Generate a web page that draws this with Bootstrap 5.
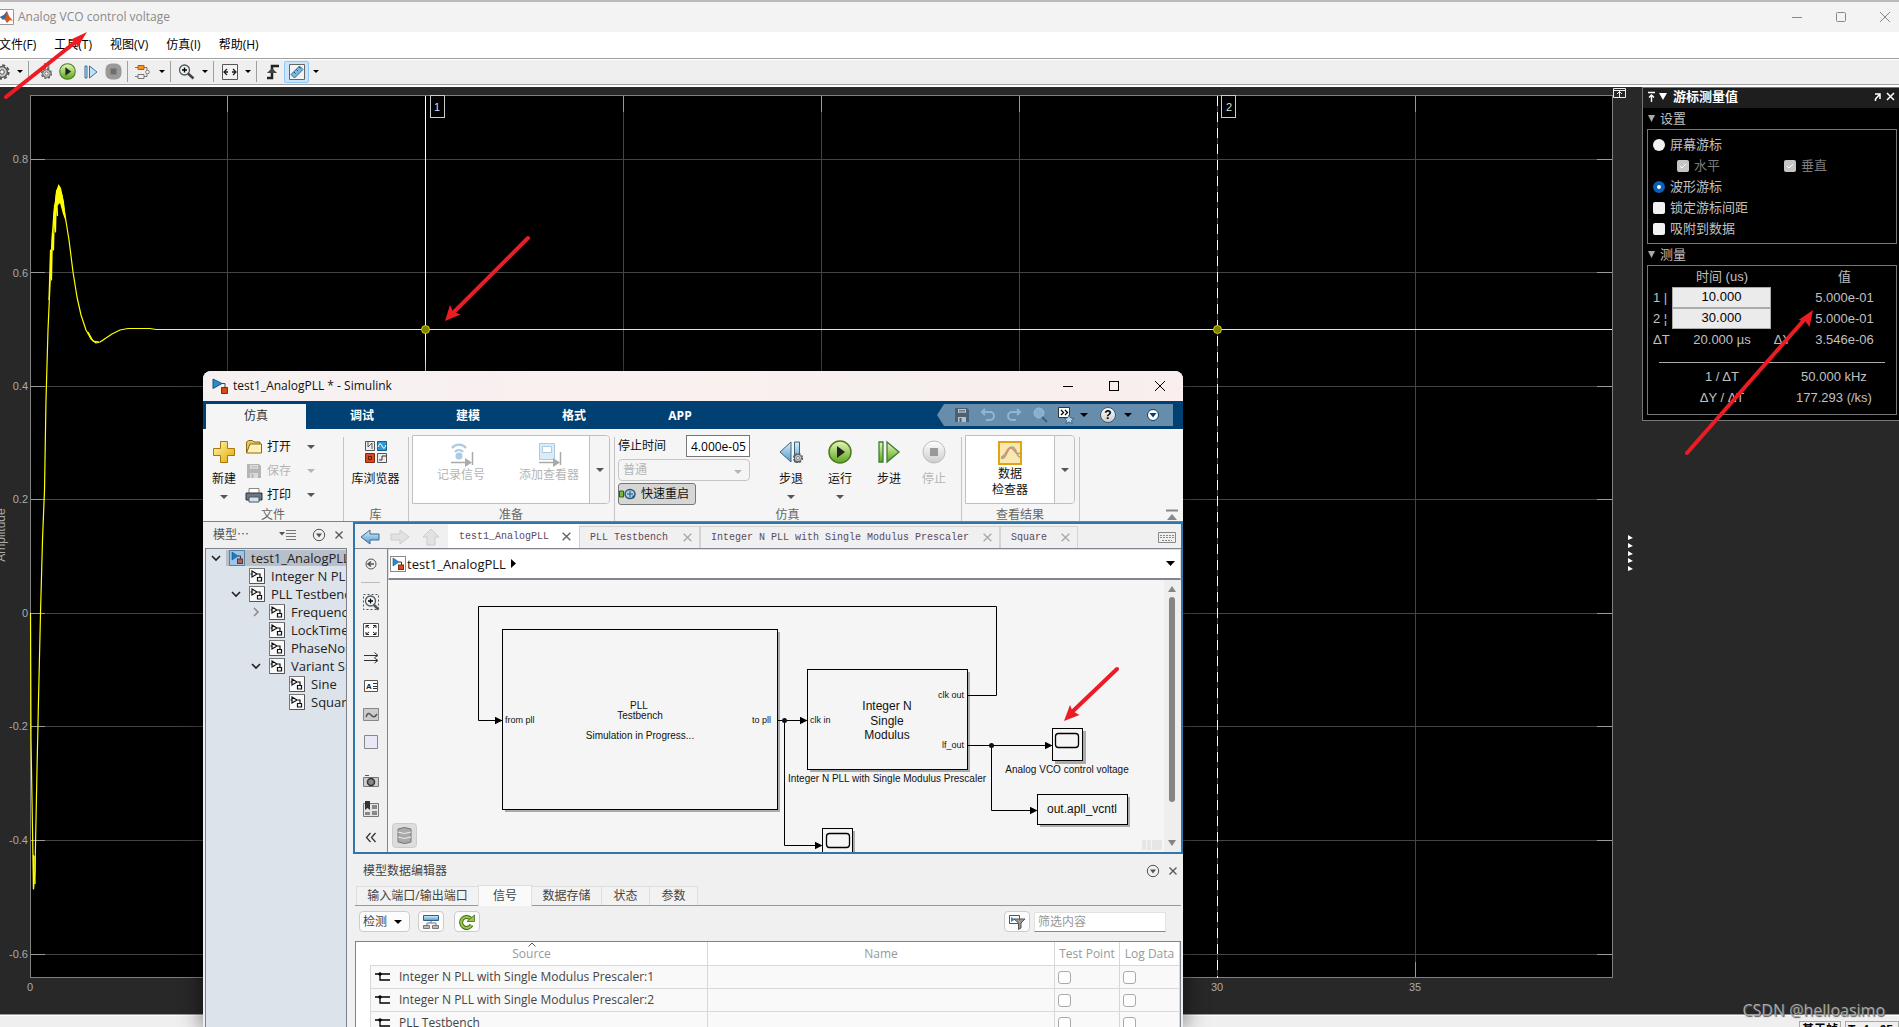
<!DOCTYPE html>
<html lang="zh-CN">
<head>
<meta charset="utf-8">
<meta name="viewport" content="width=device-width, initial-scale=1">
<title>Analog VCO control voltage</title>
<link rel="stylesheet" href="https://cdn.jsdelivr.net/npm/bootstrap@5.3.0/dist/css/bootstrap.min.css">
<style>
:root{--ui:"Open Sans","Noto Sans CJK SC",sans-serif;--arial:"Liberation Sans","Noto Sans CJK SC",sans-serif;--song:"Liberation Mono","Noto Sans CJK SC",monospace;}
body{font-family:var(--ui);font-size:12px;line-height:16px;color:#111;background:#282828;overflow:hidden}
button{border:0;background:none;padding:0;color:inherit;font:inherit;line-height:16px}
svg{display:block;flex:none}
a{color:inherit;text-decoration:none}
.nowrap{white-space:nowrap}
.tri{width:0;height:0;border:4px solid transparent;border-top-color:#555;border-bottom:0;display:block;flex:none}
.tri.dark{border-top-color:#000}
.tri.pale{border-top-color:#b5b5b5}
/* scope window */
.scope-title{height:32px;background:#f3f3f3;border-top:2px solid #b9b9b9;color:#8a8a8a}
.scope-menu{height:27px;background:#fff;border-bottom:1px solid #a0a0a0;gap:18px;margin-left:-1px}
.scope-tools{height:28px;background:#efefef;border-top:1px solid #fff;border-bottom:2px solid #fff;box-shadow:inset 0 -1px #a0a0a0;padding-bottom:2px}
.tbi{width:23px;height:22px;display:flex;align-items:center;justify-content:center}
.tbi.on{width:25px;background:#cce4f9;border:1px solid #90c8f6;border-radius:2px}
.tba{width:13px;height:22px;display:flex;align-items:center;justify-content:center}
.tba .tri{border-width:3px;border-bottom:0}
.bar{width:1px;height:21px;background:#a0a0a0;margin-right:4px;margin-left:2px}
.first-tool{margin-left:-10px}
.statusbar{height:12px;background:#efefef;border-top:1px solid #fff;box-shadow:0 -1px #999;font-size:12px;overflow:hidden;font-family:var(--arial)}
.statusbar span{border:1px solid #a8a8a8;height:20px;margin-top:5px;padding:0 2px;line-height:16px;white-space:nowrap}
.statusbar .rate{width:54px}
.watermark{right:14px;bottom:7px;font:16px/20px "Open Sans",sans-serif;color:#a9a9a9;text-shadow:1px 1px 1px #555}
/* measurements dock */
.dock{width:257px;background:#000;border:1px solid #777;border-right:0;color:#c0c0c0;font-family:var(--arial);font-size:13px;padding-bottom:5px}
.dock-head{height:20px;background:#1e1e1e;color:#fff;font-weight:700;padding:0 4px 2px}
.dock-sub{height:21px;padding-left:5px;gap:5px}
.dock-box{border:1px solid #777;margin:0 2px 0 4px}
.opts{height:115px;padding:4px 5px}
.opts label{height:21px;gap:5px}
.opts input,.grid-check{appearance:none;width:12px;height:12px;background:#f2f2f2;border-radius:2px;margin:0;flex:none}
.opts input[type=radio]{border-radius:50%}
.opts input[type=radio]:checked{border:4px solid #0a5fb8;background:#fff}
.opts input:disabled{background:#c4c4c4 url("data:image/svg+xml,%3Csvg xmlns='http://www.w3.org/2000/svg' viewBox='0 0 12 12'%3E%3Cpath d='M3 6l2 2 4-4' fill='none' stroke='white'/%3E%3C/svg%3E")}
.opts .off{color:#7c7c7c}
.meas{table-layout:fixed;width:100%;margin-bottom:6px}
.meas td,.meas th{height:21px;padding:0;text-align:center;font-weight:400;line-height:16px}
.meas .lab{text-align:left;padding-left:5px}
.meas input{width:99px;height:21px;border:1px solid #aaa;background:#ebebeb;text-align:center;padding:0 0 2px;display:block;color:#000;border-radius:0}
.meas .rule td{height:16px;vertical-align:bottom;padding:0 11px}
.meas .rule hr{margin:0 0 3px;opacity:1;color:#aaa}
/* simulink window */
.sim{left:203px;top:371px;width:980px;bottom:0;background:#f0f0f0;border-radius:8px 8px 0 0;overflow:hidden;box-shadow:0 0 24px rgba(0,0,0,.6)}
.sim-title{height:30px;background:linear-gradient(90deg,#f6f1f1,#faf0ef 50%,#f6f0ee 70%,#faeeee);padding-left:9px;gap:4px}
.sim-title .win{width:46px;height:30px;display:flex;align-items:center;justify-content:center}
.ribbon-tabs{height:28px;background:#004073;padding:3px 10px 0 3px}
.ribbon-tabs a{width:100px;margin-right:6px;text-align:center;color:#fff;font-weight:700;line-height:24px;height:25px}
.ribbon-tabs a.active{background:#f5f5f5;color:#333;font-weight:400}
.quick{width:236px;height:22px;background:#668dac;clip-path:polygon(0 50%,7px 0,100% 0,100% 100%,7px 100%);padding-left:17px}
.ribbon{height:93px;background:#f5f5f5;border-bottom:1px solid #808080}
.sect{position:relative;padding-top:6px}
.sect+.sect::before{content:"";position:absolute;left:0;top:8px;bottom:0;width:1px;background:#c4c4c4}
.sect>.cap{position:absolute;left:0;right:0;bottom:-2px;text-align:center;color:#666}
.big{display:flex;flex-direction:column;align-items:center;padding-top:5px;gap:7px}
.big .tri{margin-top:1px}
.dim{color:#b5b5b5}
.gal{background:#fff;border:1px solid #c0c0c0;border-radius:0 4px 4px 0;height:69px}
.gal .big{padding-top:4px;gap:0}
.gal .log{width:96px}
.gal .drop{width:20px;border-left:1px solid #c0c0c0;background:#f5f5f5;border-radius:0 4px 4px 0}
.s-file{width:140px}.s-lib{width:65px}.s-prep{width:206px}.s-run{width:347px}.s-res{width:118px}
.file-row{height:24px}
.simopts{gap:2px}
.stoptime{width:64px;height:22px;border:1px solid #777;background:#fff;padding:0 0 0 4px;font-size:12px}
.mode{width:132px;height:22px;border:1px solid #c6c6c6;border-radius:4px;background:#f5f5f5;color:#b5b5b5;padding:0 4px;font-size:12px;appearance:none}
.fast{width:78px;height:22px;border:1px solid #777;border-radius:3px;background:#d6d6d6}
/* model browser */
.browser{width:144px;padding-left:2px}
.browser-head{height:26px;color:#555;padding:0 3px 0 8px}
.tree{background:#dce3eb;border:1px solid #7a828e;border-bottom:0;overflow:hidden;list-style:none;margin:0;padding:0;font-size:13px;color:#222}
.tree li{height:18px;display:flex;align-items:center;gap:6px;white-space:nowrap}
.tree li.l0{padding-left:3px}.tree li.l1{padding-left:23px}.tree li.l2{padding-left:43px}.tree li.l3{padding-left:63px}
.tree li.l0>span{display:flex;gap:6px;align-items:center;background:#b9bfc9;margin-left:-3px;padding-left:3px;flex:1}
.chev{width:14px;height:10px;flex:none}
.work{width:830px;margin-left:6px}
.editor{height:332px;border:2px solid #2f76ab;background:#f0f0f0}
.doc-tabs{height:25px;border-bottom:1px solid #82858f;font:10px/16px var(--song);color:#5c4a5c}
.doc-tabs .doc{height:22px;margin-top:2px;border:1px solid #d4d4d4;border-bottom:0;padding:0 6px 0 10px;background:#f0f0f0}
.doc-tabs .doc.active{background:#fff;height:24px;margin-top:0;border-color:#fff}
.d-a{width:131px}.d-b{width:121px}.d-c{width:300px}.d-d{width:78px}
.palette{width:33px;border-right:1px solid #82858f}
.crumb{height:31px;background:#fff;border:1px solid #ddd;border-bottom:2px solid #82858f;padding:0 4px 1px 1px;gap:1px;font-size:13px}
.canvas-bg{background:#f5f5f5}
.dataed-head{height:30px;padding:4px 5px 0 10px;color:#444}
.dt{border-bottom:1px solid #999;height:22px;padding-left:2px;margin:0 2px 0 2px;color:#444;align-items:flex-end}
.dt button{height:19px;border:1px solid #dedede;border-bottom:0;margin-left:-1px;background:#f2f2f2}
.dt button.active{background:#fafafa;height:21px;margin-bottom:-1px;padding:0 14px}
.dt .w5{width:123px}.dt .w4{width:71px}.dt .w2{width:49px}
.dtools{height:35px;padding:0 17px 4px 6px}
.dtools .sq,.pick{border:1px solid #ccc;border-radius:4px;background:#fcfcfc;height:21px}
.sq{width:26px;display:flex;align-items:center;justify-content:center}
.sq.next{margin-left:10px}
.pick{width:51px;font-size:12px;padding:0 3px;appearance:none;color:#444}
.filt{width:132px;height:20px;border:1px solid #e2e2e2;border-bottom-color:#888;background:#fff;padding:0 3px;font-size:12px}
.filt::placeholder{color:#999}
.sigs{margin:0 2px;border:1px solid #7d8290;border-bottom:0;background:#fff;overflow:hidden;color:#444}
.sigs table{width:100%;table-layout:fixed;border-collapse:separate;border-spacing:0}
.sigs th{height:23px;font-weight:400;color:#999;text-align:center;padding:1px 0 0;border-right:1px solid #d8d8d8;line-height:16px;position:relative;white-space:nowrap}
.sigs td{height:23px;padding:0;border-top:1px solid #d8d8d8;border-right:1px solid #d8d8d8;background:#f9f9f9;line-height:16px}
.sigs td.gut{background:#fff;border-top:0}
.grid-check{display:block;width:13px;height:13px;background:#fdfdfd;border:1px solid #aaa;border-radius:3px;margin-left:3px}
.marks{inset:0;pointer-events:none}
</style>
<script src="https://cdn.jsdelivr.net/npm/bootstrap@5.3.0/dist/js/bootstrap.bundle.min.js"></script>
</head>
<body class="vh-100 d-flex flex-column position-relative">
<svg width="0" height="0" class="position-absolute" aria-hidden="true">
<defs>
<linearGradient id="gGreen" x2="0" y2="1"><stop stop-color="#e6f8b8"/><stop offset="1" stop-color="#5aa51c"/></linearGradient>
<linearGradient id="gGray" x2="0" y2="1"><stop stop-color="#fff"/><stop offset="1" stop-color="#ccc"/></linearGradient>
<linearGradient id="gBlue" x2="0" y2="1"><stop stop-color="#d9effb"/><stop offset="1" stop-color="#4f9acb"/></linearGradient>
<linearGradient id="gGold" x2="1" y2="1"><stop stop-color="#fff6b0"/><stop offset="1" stop-color="#e2a800"/></linearGradient>
<symbol id="gear" viewBox="0 0 20 20"><circle cx="10" cy="10" r="7.500" fill="none" stroke="#555" stroke-width="2" stroke-dasharray="3.500 2.390"/><circle cx="10" cy="10" r="6" fill="#ccc" stroke="#555" stroke-width="1.500"/><circle cx="10" cy="10" r="2.500" fill="#fff" stroke="#444"/></symbol>
<symbol id="play" viewBox="0 0 24 24"><circle cx="12" cy="12" r="11" fill="url(#gGreen)" stroke="#4c7a24" stroke-width="1.500"/><path d="M9 6l8 6-8 6z" fill="#222"/></symbol>
<symbol id="blk" viewBox="0 0 16 16"><rect x=".5" y=".5" width="15" height="15" fill="#fafafa" stroke="#777"/><path d="M15.500 1v14.500H1" fill="none" stroke="#555"/><path d="M3 3l5 3-5 3zM8 6h3v3M8.500 9.500h4v3.500h-4zM1.500 6H3" fill="none" stroke="#111" stroke-width="1.200"/></symbol>
<symbol id="mdl" viewBox="0 0 16 16"><rect x=".5" y=".5" width="15" height="15" fill="#fff" stroke="#888"/><path d="M3 2l6 4-6 4z" fill="#2b8cc9" stroke="#135580" stroke-width=".6"/><path d="M9 6h2.500v3" fill="none" stroke="#333"/><rect x="8.500" y="9" width="5" height="4.500" fill="#d9481c" stroke="#832a0c"/></symbol>
<symbol id="mdl2" viewBox="0 0 16 16"><path fill="#9cc5e8" stroke="#5a7f9e" d="M.5.500h15v15H.5z"/><path d="M3 2l6 4-6 4z" fill="#1b7cc0" stroke="#135580" stroke-width=".6"/><path d="M9 6h2.500v3" fill="none" stroke="#333"/><rect x="8.500" y="9" width="5" height="4.500" fill="#a7675c" stroke="#633"/></symbol>
<symbol id="xx" viewBox="0 0 10 10"><path d="M1.500 1.500l7 7m0-7l-7 7" stroke="currentColor" stroke-width="1.300"/></symbol>
<symbol id="circ" viewBox="0 0 14 14"><circle cx="7" cy="7" r="5.700" fill="none" stroke="#555"/><path d="M4 5.500h6L7 9.500z" fill="#555"/></symbol>
<symbol id="flop" viewBox="0 0 16 16"><path d="M1 1h12l2 2v12H1z" fill="currentColor"/><path d="M4 2h8v4H4z" fill="#e9e9e9" opacity=".8"/><path d="M5 3.500h6M5 5h6" stroke="currentColor" stroke-width=".7"/><path d="M4 10h8v5H4z" fill="#e4e4e4" opacity=".8"/><path d="M5.500 11h2v4h-2z" fill="currentColor"/></symbol>
<symbol id="down" viewBox="0 0 14 10"><path d="M3 3l4 4 4-4" fill="none" stroke="#222" stroke-width="1.600"/></symbol>
<symbol id="sig" viewBox="0 0 16 10"><path d="M0 2h15M5 2v6h10" fill="none" stroke="#000" stroke-width="1.300"/><circle cx="5" cy="2" r="1.700"/></symbol>
<marker id="ah" viewBox="0 0 8 8" refX="7" refY="4" markerWidth="8" markerHeight="8" markerUnits="userSpaceOnUse" orient="auto"><path d="M0 0l8 4-8 4z"/></marker>
</defs></svg>

<header class="scope-title d-flex align-items-center flex-shrink-0 pe-1">
  <svg width="14" height="16" viewBox="0 0 14 16"><path d="M0 .5h13.500v15H0" fill="#fff" stroke="#999"/><path d="M0 8l4-2 3-4 2 5 4 5-3-1-3 3-2-3z" fill="#d9541e"/><path d="M0 8l4-2 3-4-1 6-3 3z" fill="#2b6ea8"/></svg>
  <span class="ms-1">Analog VCO control voltage</span>
  <span class="ms-auto d-flex align-items-center">
    <button aria-label="最小化" class="me-4"><svg width="12" height="12"><path d="M1 6.500h10" stroke="#888"/></svg></button>
    <button aria-label="最大化" class="mx-2"><svg width="12" height="12"><rect x="1.500" y="1.500" width="9" height="9" rx="1" fill="none" stroke="#888"/></svg></button>
    <button aria-label="关闭" class="ms-4 me-1"><svg width="12" height="12"><path d="M1 1l10 10M11 1L1 11" stroke="#888"/></svg></button>
  </span>
</header>
<nav class="scope-menu d-flex align-items-center flex-shrink-0 text-black">
  <a href="#">文件(F)</a><a href="#">工具(T)</a><a href="#">视图(V)</a><a href="#">仿真(I)</a><a href="#">帮助(H)</a>
</nav>
<div class="scope-tools d-flex align-items-center flex-shrink-0">
  <button class="tbi first-tool" aria-label="设置"><svg width="18" height="18"><use href="#gear"/></svg></button><button class="tba" aria-label="更多"><i class="tri dark"></i></button>
  <i class="bar"></i>
  <button class="tbi" aria-label="仿真设置"><svg width="18" height="18" viewBox="0 0 18 18"><path d="M9 0v6M12.500 0v6" stroke="#69a" stroke-width="2"/><use href="#gear" x="4" y="4" width="13" height="13"/></svg></button>
  <button class="tbi" aria-label="运行"><svg width="17" height="17"><use href="#play"/></svg></button>
  <button class="tbi" aria-label="步进"><svg width="14" height="14" viewBox="0 0 14 14"><path d="M1 1h2v12H1zM5.500 1l7.500 6-7.500 6z" fill="#bfe0f5" stroke="#3a6f9c"/></svg></button>
  <button class="tbi" aria-label="停止"><svg width="17" height="17" viewBox="0 0 17 17"><rect x=".5" y=".5" width="16" height="16" rx="6" fill="#9a9a9a"/><path d="M5.500 5.500h6v6h-6z" fill="#6e6e6e"/></svg></button>
  <i class="bar"></i>
  <button class="tbi" aria-label="模块"><svg width="17" height="16" viewBox="0 0 17 16"><path d="M3 1.500h6v4H3z" fill="#f7941d" stroke="#c3501a"/><path d="M3 10.500h6v4H3zM9 3.500h3v3M9 12.500h3v-3M0 3.500h3M0 12.500h3" fill="none" stroke="#777"/><circle cx="12.500" cy="8" r="1.800" fill="#fff" stroke="#777"/></svg></button><button class="tba" aria-label="更多"><i class="tri dark"></i></button>
  <i class="bar"></i>
  <button class="tbi" aria-label="放大"><svg width="17" height="16" viewBox="0 0 17 16"><circle cx="6.500" cy="6" r="5" fill="#e8f4fb" stroke="#555" stroke-width="1.300"/><path d="M4 6h5M6.500 3.500v5" stroke="#000" stroke-width="1.400"/><path d="M10 9.500l5.500 5" stroke="#444" stroke-width="2.500"/></svg></button><button class="tba" aria-label="更多"><i class="tri dark"></i></button>
  <i class="bar"></i>
  <button class="tbi" aria-label="缩放"><svg width="16" height="16" viewBox="0 0 16 16"><path d="M.5.500h15v15H.5z" fill="#f3f3f3" stroke="#555"/><path d="M5 5L2 8l3 3M11 5l3 3-3 3M2 8h4M14 8h-4" fill="none" stroke="#222" stroke-width="1.300"/></svg></button><button class="tba" aria-label="更多"><i class="tri dark"></i></button>
  <i class="bar"></i>
  <button class="tbi" aria-label="触发"><svg width="14" height="16" viewBox="0 0 14 16"><path d="M1 14h5V2h7" fill="none" stroke="#222" stroke-width="2.500"/><path d="M1 9l5-5 5 5z" fill="#444"/></svg></button>
  <button class="tbi on" aria-label="游标"><svg width="16" height="16" viewBox="0 0 16 16"><path d="M.5.500h15v15H.5z" fill="#f3f3f3" stroke="#666"/><path d="M2 10.500L10.500 2 14 5.500 5.500 14z" fill="#7db8dc" stroke="#336a94"/><path d="M5 8l1.500 1.500M7.500 5.500L9 7M10 3l1.500 1.500" stroke="#1e4c70"/></svg></button><button class="tba" aria-label="更多"><i class="tri dark"></i></button>
</div>

<main class="d-flex flex-grow-1 overflow-hidden align-items-start">
  <svg class="flex-grow-1" style="width:0" viewBox="0 87 1642 928" preserveAspectRatio="xMinYMin meet" font-family="Liberation Sans" font-size="11" fill="#aaa" role="img" aria-label="Amplitude">
    <path d="M30 95h1583v883H30z" fill="#000"/>
    <g shape-rendering="crispEdges" fill="none" stroke="#444">
      <path d="M227.500 96v882M425.500 96v882M623.500 96v882M821.500 96v882M1019.500 96v882M1217.500 96v882M1415.500 96v882M30 159.500h1583M30 272.500h1583M30 386.500h1583M30 499.500h1583M30 613.500h1583M30 726.500h1583M30 840.500h1583M30 954.500h1583"/>
      <path stroke="#999" d="M227.500 96v16M623.500 96v16M821.500 96v16M1019.500 96v16M1415.500 96v16M1415.500 962v16M227.500 962v16M30 159.500h15M30 272.500h15M30 386.500h15M30 499.500h15M30 613.500h15M30 726.500h15M30 840.500h15M30 954.500h15M1597 159.500h16M1597 272.500h16M1597 386.500h16M1597 499.500h16M1597 613.500h16M1597 726.500h16M1597 840.500h16M1597 954.500h16"/>
      <path stroke="#808080" d="M30.500 95v883M1612.500 95v883M30 95.500h1583M30 977.500h1583"/>
      <path stroke="#fff" d="M425.500 96v882"/><path stroke="#fff" stroke-dasharray="10 6" d="M1217.500 96v882"/>
      <path stroke="#ccc" fill="#000" d="M430.500 95.500h14v22h-14zM1221.500 95.500h14v22h-14z"/>
    </g>
    <g text-anchor="end"><text x="28" y="163">0.8</text><text x="28" y="277">0.6</text><text x="28" y="390">0.4</text><text x="28" y="503">0.2</text><text x="28" y="617">0</text><text x="28" y="730">-0.2</text><text x="28" y="844">-0.4</text><text x="28" y="958">-0.6</text></g>
    <g text-anchor="middle"><text x="30" y="991">0</text><text x="1217" y="991">30</text><text x="1415" y="991">35</text><text x="437" y="111" fill="#ddd">1</text><text x="1229" y="111" fill="#ddd">2</text><text transform="translate(5 535) rotate(-90)" font-size="12">Amplitude</text></g>
    <g fill="none" stroke="#ff0" stroke-width="1.200" stroke-linejoin="round">
      <path d="M30.500 613L31 740 32.500 830 33.500 889 35 870 37 770 38.500 700 40.500 613 42.500 540 44.500 490 46 400 48 330 50 285 52 240 54 212 57 190 59 187 62 196 65 215 69 240 73 272 77 297 81 315 86 330 91 339 96 343 100 342 106 338 112 334 120 330 128 328.500 150 328.500 156 329.500H1612"/>
      <path d="M49 300L50.500 250 51.500 280 52.500 232 53.500 250 54.500 205 55.500 232 56.500 191 57.500 216M88 332L93 341 99 342"/>
      <path fill="#ff0" stroke="none" d="M53 222L56 192 58.500 184 61 188 64 202 66 222 63 214 60 203 57 206 54 232z"/>
      <path d="M33.500 855v34M35 856v28"/>
    </g>
    <g fill="#808000" stroke="#cccc00"><circle cx="425.500" cy="329.500" r="4"/><circle cx="1217.500" cy="329.500" r="4"/></g>
    <g fill="none" stroke="#eee"><path d="M1613.500 88.500h12v9h-12zM1613 90.500h13M1619.500 97v-6M1617 94l2.500-2.500 2.500 2.500"/></g>
    <path fill="#fff" d="M1628 535l5 3-5 2zM1628 543l5 3-5 2zM1628 551l5 3-5 2zM1628 558l5 3-5 2zM1628 566l5 3-5 2z"/>
  </svg>
  <aside class="dock flex-shrink-0">
    <div class="dock-head d-flex align-items-center gap-1">
      <svg width="22" height="12" viewBox="0 0 22 12"><path d="M1 1.500h7M4.500 11V4M2 6.500L4.500 4 7 6.500" fill="none" stroke="#fff" stroke-width="1.400"/><path d="M12 2h8l-4 7z" fill="#fff"/></svg>
      <span>游标测量值</span>
      <svg class="ms-auto" width="22" height="12" viewBox="0 0 22 12"><path d="M2 3h5v5M7 3L2.500 8v2" fill="none" stroke="#fff" stroke-width="1.500"/><path d="M14 2l7 7M21 2l-7 7" stroke="#fff" stroke-width="1.500"/></svg>
    </div>
    <div class="dock-sub d-flex align-items-center"><svg width="7" height="7"><path d="M0 0h7L3.500 7z" fill="#aaa"/></svg>设置</div>
    <div class="dock-box opts">
      <label class="d-flex align-items-center"><input type="radio" name="cur">屏幕游标</label>
      <div class="d-flex off">
        <label class="d-flex align-items-center w-50 ps-4"><input type="checkbox" checked disabled>水平</label>
        <label class="d-flex align-items-center ps-2 ms-1"><input type="checkbox" checked disabled>垂直</label>
      </div>
      <label class="d-flex align-items-center"><input type="radio" name="cur" checked>波形游标</label>
      <label class="d-flex align-items-center"><input type="checkbox">锁定游标间距</label>
      <label class="d-flex align-items-center"><input type="checkbox">吸附到数据</label>
    </div>
    <div class="dock-sub d-flex align-items-center"><svg width="7" height="7"><path d="M0 0h7L3.500 7z" fill="#aaa"/></svg>测量</div>
    <div class="dock-box">
      <table class="meas">
        <colgroup><col style="width:24px"><col style="width:100px"><col style="width:21px"><col></colgroup>
        <tr><th></th><th scope="col">时间 (us)</th><th></th><th scope="col">值</th></tr>
        <tr><td class="lab">1 |</td><td><input aria-label="游标 1 时间" value="10.000"></td><td></td><td>5.000e-01</td></tr>
        <tr><td class="lab">2 ¦</td><td><input aria-label="游标 2 时间" value="30.000"></td><td></td><td>5.000e-01</td></tr>
        <tr><td class="lab">ΔT</td><td>20.000 µs</td><td>ΔY</td><td>3.546e-06</td></tr>
        <tr class="rule"><td colspan="4"><hr></td></tr>
        <tr><td></td><td>1 / ΔT</td><td colspan="2">50.000 kHz</td></tr>
        <tr><td></td><td>ΔY / ΔT</td><td colspan="2">177.293 (/ks)</td></tr>
      </table>
    </div>
  </aside>
</main>
<footer class="statusbar d-flex flex-shrink-0 justify-content-end fw-bold text-black"><span>基于帧</span><span class="rate ms-1">T=4e-05</span></footer>
<div class="watermark position-absolute">CSDN @helloasimo</div>

<section class="sim position-absolute d-flex flex-column">
  <div class="sim-title d-flex align-items-center flex-shrink-0">
    <svg width="17" height="17" viewBox="0 0 17 17"><path d="M1 1l9 4.500-9 5z" fill="#2b8cc9" stroke="#14557f"/><path d="M10 5.500h3V10" fill="none" stroke="#444"/><path d="M9.500 9.500h6v6h-6z" fill="#d9481c" stroke="#832a0c"/></svg>
    <span>test1_AnalogPLL * - Simulink</span>
    <span class="ms-auto d-flex">
      <button class="win" aria-label="最小化"><svg width="12" height="12"><path d="M1 6.500h10" stroke="#000"/></svg></button>
      <button class="win" aria-label="最大化"><svg width="12" height="12"><rect x="1.500" y="1.500" width="9" height="9" fill="none" stroke="#000"/></svg></button>
      <button class="win" aria-label="关闭"><svg width="12" height="12"><path d="M1 1l10 10M11 1L1 11" stroke="#000"/></svg></button>
    </span>
  </div>
  <nav class="ribbon-tabs d-flex flex-shrink-0">
    <a href="#" class="active">仿真</a><a href="#">调试</a><a href="#">建模</a><a href="#">格式</a><a href="#">APP</a>
    <div class="quick ms-auto d-flex align-items-center">
      <svg width="219" height="20" viewBox="0 0 219 20">
        <g color="#47596a" opacity=".85"><use href="#flop" x="0" y="2" width="16" height="16"/></g>
        <path d="M31 4l-3 3 3 3M28 7h8a4 4 0 010 8h-4" fill="none" stroke="#8fb6d4" stroke-width="2"/>
        <path d="M63 4l3 3-3 3M66 7h-8a4 4 0 000 8h4" fill="none" stroke="#8fb6d4" stroke-width="2"/>
        <circle cx="85" cy="8" r="5" fill="#86b0d0" stroke="#9bbcd6"/><path d="M88 12l5 5" stroke="#3d607c" stroke-width="2"/>
        <path d="M104.500 2.500h11v10h-11z" fill="#fff" stroke="#333"/><path d="M107 5l2.500 2.500L107 10M111 5l2.500 2.500L111 10" fill="none" stroke="#000" stroke-width="1.300"/><path d="M115 10l1.500 3 3.500.5-2.500 2 .6 3-3.100-1.500-3 1.500.5-3-2-2 3-.5z" fill="#bcd6e8" stroke="#2f5878" stroke-width=".8"/>
        <path d="M126 8h8l-4 4zM170 8h8l-4 4z"/>
        <circle cx="154" cy="10" r="7.500" fill="url(#gGray)" stroke="#456"/><text x="154" y="14" text-anchor="middle" font-size="12" font-weight="700" font-family="Liberation Sans">?</text>
        <circle cx="199" cy="10" r="5.500" fill="#fff" stroke="#0d3d66"/><path d="M195.500 8h7l-3.500 4.500z" fill="#0d3d66"/>
      </svg>
    </div>
  </nav>
  <div class="ribbon d-flex flex-shrink-0">
    <div class="sect s-file d-flex">
      <button class="big ms-2" style="width:26px"><svg width="24" height="24" viewBox="0 0 24 24"><path d="M8.500 1.500h7v7h7v7h-7v7h-7v-7h-7v-7h7z" fill="url(#gGold)" stroke="#a87908"/></svg><span class="nowrap">新建</span><i class="tri"></i></button>
      <div class="d-flex flex-column ms-2">
        <button class="file-row d-flex align-items-center gap-1"><svg width="18" height="16" viewBox="0 0 18 16"><path d="M1.500 14V3l2-1.500h4L9 3h6v2" fill="#e8c563" stroke="#8d6a12"/><path d="M1.500 14L5 5h11.500v9z" fill="#fff0b8" stroke="#8d6a12"/></svg><span class="me-1">打开</span><i class="tri ms-2"></i></button>
        <button class="file-row d-flex align-items-center gap-1 dim" disabled><svg width="18" height="16"><use href="#flop" width="16" x="1" height="16"/></svg><span class="me-1">保存</span><i class="tri pale ms-2"></i></button>
        <button class="file-row d-flex align-items-center gap-1"><svg width="18" height="16" viewBox="0 0 18 16"><path d="M4 6V1.500h10V6" fill="#fff" stroke="#888"/><path d="M1 6h16v7H1z" fill="#6b7785" stroke="#333"/><path d="M4 10h10v5H4z" fill="#cfe4f5" stroke="#555"/></svg><span class="me-1">打印</span><i class="tri ms-2"></i></button>
      </div>
      <div class="cap">文件</div>
    </div>
    <div class="sect s-lib">
      <button class="big w-100"><svg width="24" height="24" viewBox="0 0 24 24"><path d="M1.500 1.500h9v9h-9z" fill="#eee" stroke="#555"/><path d="M4 2v5l4-4v6" stroke="#555" fill="none"/><path d="M13.500 1.500h9v9h-9z" fill="#2b9ad6" stroke="#1a5f8a"/><path d="M14 7q2-6 4-1t4-1" stroke="#fff" fill="none"/><path d="M1.500 13.500h9v9h-9z" fill="#d9481c" stroke="#832a0c"/><path d="M4.500 16.500h3v3h-3z" fill="none" stroke="#521"/><path d="M13.500 13.500h9v9h-9z" fill="#eee" stroke="#555"/><path d="M15 20h3v-4h4" fill="none" stroke="#333"/></svg><span>库浏览器</span></button>
      <div class="cap">库</div>
    </div>
    <div class="sect s-prep px-1">
      <div class="gal d-flex dim">
        <button class="big dim log" disabled><svg width="28" height="27" viewBox="0 0 28 27"><path d="M5 8a9 9 0 0114 0M8 12a5 5 0 018 0" fill="none" stroke="#a9cbe4" stroke-width="2.200"/><circle cx="12" cy="16" r="3.500" fill="#a9cbe4"/><path d="M4 22.500h18M25.500 12v13" stroke="#aaa" stroke-width="1.500"/><path d="M18 18l7 4.500-7 4.500z" fill="#aaa"/></svg><span>记录信号</span></button>
        <button class="big dim flex-fill" disabled><svg width="28" height="27" viewBox="0 0 28 27"><path d="M4.500 3.500h15v16h-15z" fill="#dcebf6" stroke="#a9cbe4"/><path d="M7.500 6.500h9v6h-9z" fill="#fff" stroke="#a9cbe4"/><path d="M4 22.500h18M25.500 12v13" stroke="#aaa" stroke-width="1.500"/><path d="M18 18l7 4.500-7 4.500z" fill="#aaa"/></svg><span>添加查看器</span></button>
        <button class="drop d-flex align-items-center justify-content-center" aria-label="更多"><i class="tri"></i></button>
      </div>
      <div class="cap">准备</div>
    </div>
    <div class="sect s-run d-flex ps-1">
      <div class="simopts d-flex flex-column">
        <label class="d-flex align-items-center justify-content-between">停止时间<input class="stoptime" value="4.000e-05"></label>
        <div class="position-relative"><select class="mode" disabled aria-label="仿真模式"><option>普通</option></select><i class="tri pale position-absolute top-50 end-0 me-2"></i></div>
        <button class="fast d-flex align-items-center gap-1"><svg width="18" height="14" viewBox="0 0 18 14"><path d="M.5 4h4v6h-4z" fill="#7db83a" stroke="#335c10"/><ellipse cx="11" cy="7" rx="5" ry="4.500" fill="#a9cbe4" stroke="#2c5878" stroke-width="1.500"/><path d="M8 7h6M11 4v6" stroke="#2c5878"/><path d="M13 9l3-1-1 4z" fill="#2c5878"/></svg>快速重启</button>
      </div>
      <div class="d-flex ms-3">
        <button class="big" style="width:50px"><svg width="26" height="24" viewBox="0 0 26 24"><path d="M13 2v20L2 12zM16.500 2h5v20h-5z" fill="url(#gBlue)" stroke="#41607a"/><use href="#gear" x="14" y="12" width="12" height="12"/></svg>步退<i class="tri"></i></button>
        <button class="big" style="width:48px"><svg width="25" height="24"><use href="#play" width="24" height="24"/></svg>运行<i class="tri"></i></button>
        <button class="big" style="width:50px"><svg width="24" height="24" viewBox="0 0 24 24"><path d="M2 2h4v20H2zM10 2l12 10-12 10z" fill="url(#gGreen)" stroke="#3f7a3a" stroke-width="1.300"/></svg>步进</button>
        <button class="big dim" style="width:40px" disabled><svg width="24" height="24" viewBox="0 0 24 24"><circle cx="12" cy="12" r="11" fill="url(#gGray)" stroke="#bbb"/><path d="M8 8h8v8H8z" fill="#999"/></svg>停止</button>
      </div>
      <div class="cap">仿真</div>
    </div>
    <div class="sect s-res px-1">
      <div class="gal d-flex">
        <button class="big flex-fill"><svg width="24" height="26" viewBox="0 0 24 26"><path d="M1 2h22v22H1z" fill="#fbe7b0" stroke="#dfa414" stroke-width="2"/><path d="M3 18C9 20 9 7 14 7s4 10 8 10" fill="none" stroke="#8db3a0" stroke-width="1.500"/><path d="M3 17c5 0 6-11 10-9 4 1 4 8 9 5" fill="none" stroke="#df8b63" stroke-width="1.500"/></svg><span>数据<br>检查器</span></button>
        <button class="drop d-flex align-items-center justify-content-center" aria-label="更多"><i class="tri"></i></button>
      </div>
      <div class="cap">查看结果</div>
    </div>
    <div class="sect flex-grow-1 d-flex justify-content-end align-items-end pe-1"><button aria-label="折叠"><svg width="14" height="12"><path d="M1 1.500h12" stroke="#888" stroke-width="2"/><path d="M2 11l5-6 5 6z" fill="#888"/></svg></button></div>
  </div>

  <div class="d-flex flex-grow-1 overflow-hidden">
    <div class="browser d-flex flex-column flex-shrink-0">
      <div class="browser-head d-flex align-items-center flex-shrink-0"><span class="nowrap">模型⋯</span>
        <svg class="ms-auto me-3" width="17" height="12"><path d="M0 3h6L3 6.500z" fill="#555"/><path d="M7 1.500h10M7 4.500h10M7 7.500h10M7 10.500h10" stroke="#777"/></svg>
        <svg class="me-2" width="14" height="14"><use href="#circ"/></svg><svg width="10" height="10" color="#555"><use href="#xx"/></svg></div>
      <ul class="tree flex-grow-1">
        <li class="l0"><svg class="chev"><use href="#down"/></svg><span><svg width="16" height="16"><use href="#mdl2"/></svg>test1_AnalogPLL</span></li>
        <li class="l1"><i class="chev"></i><svg width="16" height="16"><use href="#blk"/></svg>Integer N PLL</li>
        <li class="l1"><svg class="chev"><use href="#down"/></svg><svg width="16" height="16"><use href="#blk"/></svg>PLL Testbench</li>
        <li class="l2"><svg class="chev" viewBox="0 0 14 10"><path d="M5 1l4 4-4 4" fill="none" stroke="#888" stroke-width="1.500"/></svg><svg width="16" height="16"><use href="#blk"/></svg>Frequency</li>
        <li class="l2"><i class="chev"></i><svg width="16" height="16"><use href="#blk"/></svg>LockTime</li>
        <li class="l2"><i class="chev"></i><svg width="16" height="16"><use href="#blk"/></svg>PhaseNoise</li>
        <li class="l2"><svg class="chev"><use href="#down"/></svg><svg width="16" height="16"><use href="#blk"/></svg>Variant Sub</li>
        <li class="l3"><i class="chev"></i><svg width="16" height="16"><use href="#blk"/></svg>Sine</li>
        <li class="l3"><i class="chev"></i><svg width="16" height="16"><use href="#blk"/></svg>Square</li>
      </ul>
    </div>
    <div class="work d-flex flex-column flex-shrink-0">
      <div class="editor d-flex flex-column flex-shrink-0">
        <div class="doc-tabs d-flex flex-shrink-0">
          <svg width="93" height="24" viewBox="0 0 93 24"><path d="M6 13l9-7v4h9v6h-9v4z" fill="url(#gBlue)" stroke="#3d6c90"/><path d="M54 13l-9-7v4h-9v6h9v4z" fill="#e2e2e2" stroke="#ccc"/><path d="M76 5l8 8h-4v8h-8v-8h-4z" fill="#e2e2e2" stroke="#ccc"/></svg>
          <div class="doc d-a active d-flex align-items-center">test1_AnalogPLL<svg class="ms-auto" width="11" height="11" color="#666"><use href="#xx"/></svg></div>
          <div class="doc d-b d-flex align-items-center">PLL Testbench<svg class="ms-auto" width="11" height="11" color="#aaa"><use href="#xx"/></svg></div>
          <div class="doc d-c d-flex align-items-center">Integer N PLL with Single Modulus Prescaler<svg class="ms-auto" width="11" height="11" color="#aaa"><use href="#xx"/></svg></div>
          <div class="doc d-d d-flex align-items-center">Square<svg class="ms-auto" width="11" height="11" color="#aaa"><use href="#xx"/></svg></div>
          <svg class="ms-auto me-1 mt-2" width="20" height="11"><path d="M3 3.500h14M3 5.500h14M5 8.500h10" fill="none" stroke="#888" stroke-dasharray="2 1"/><path d="M1.500.500h17v10h-17z" fill="none" stroke="#888"/></svg>
        </div>
        <div class="d-flex flex-grow-1">
          <svg class="palette" height="303" viewBox="355 549 32 303" fill="none" stroke="#555">
            <circle cx="371" cy="564" r="5"/><path d="M374 564h-5M371 561.500l-3 2.500 3 2.500" stroke-width="1.600"/><path d="M361 582.500h19" stroke="#bbb"/>
            <path d="M363.500 594.500h15v15h-15z" stroke-dasharray="2 2"/><circle cx="370.500" cy="601" r="5" fill="#eef6fb" stroke-width="1.300"/><path d="M368 601h5M370.500 598.500v5" stroke="#000" stroke-width="1.300"/><path d="M374 605l4.500 4.500" stroke-width="2.500"/>
            <path d="M363.500 623.500h15v13h-15z" fill="#fff"/><path d="M369 628l-3-2.500m0 2.500v-2.500h3M373 628l3-2.500m0 2.500v-2.500h-3M369 632l-3 2.500m0-2.500v2.500h3M373 632l3 2.500m0-2.500v2.500h-3" stroke="#222"/>
            <path d="M364 655.500h13M364 660.500h13M374.500 652.500l3.500 3-3.500 2M374.500 658l3.500 2.500-3.500 2.500" stroke="#333"/>
            <path d="M364.500 680.500h13v11h-13z" fill="#fff"/><text x="366" y="689" font-size="8" font-weight="700" fill="#222" stroke="none" font-family="Liberation Sans">A</text><path d="M373 683.500h4M373 686.500h4M373 688.500h4" stroke="#333"/>
            <path d="M363.500 708.500h15v12h-15z" fill="#ccc" stroke="#888"/><path d="M366 717q2-6 5-2t6-1" stroke="#555" stroke-width="1.500"/>
            <path d="M364.500 735.500h13v13h-13z" fill="#e8e8f6" stroke="#888"/>
            <path d="M363.500 777.500h15v9h-15z" fill="#ccc" stroke="#777"/><path d="M365 775.500h4"/><circle cx="371" cy="782" r="3.500" fill="#888" stroke="#333" stroke-width="1.500"/>
            <path d="M363.500 803.500h15v13h-15z" fill="#e4e4e4" stroke="#777"/><path d="M365 801h5v9l-2.500-2-2.500 2z" fill="#333" stroke="none"/><path d="M372 805h5v4h-5zM372 811h5v4h-5zM365 812h5v3h-5z" fill="#888" stroke="none"/>
            <path d="M370.500 833l-4 4.500 4 4.500M375.500 833l-4 4.500 4 4.500" stroke="#333" stroke-width="1.300"/>
          </svg>
          <div class="flex-grow-1 d-flex flex-column">
            <div class="crumb d-flex align-items-center flex-shrink-0"><svg width="16" height="16"><use href="#mdl"/></svg><span>test1_AnalogPLL</span><svg class="ms-1" width="6" height="9"><path d="M0 0l5 4.500L0 9z"/></svg><svg class="ms-auto" width="10" height="6"><path d="M0 0h9L4.500 5z"/></svg></div>
            <svg class="canvas-bg" width="100%" height="272" viewBox="388 580 793 272" preserveAspectRatio="xMinYMin slice" font-family="Liberation Sans" font-size="9" fill="#111">
              <path d="M1164 580h18v272h-18z" fill="#eee"/><rect x="1169" y="597" width="6" height="205" rx="3" fill="#858585"/><path d="M1168 592h8l-4-6zM1168 840h8l-4 6z" fill="#858585"/><path d="M1142 840h4v10h-4zM1147 840h4v10h-4zM1152 840h10v10h-10z" fill="#e6e6e6"/>
              <g fill="#000" opacity=".3"><path d="M505 632h275v180H505zM810 672h160v100H810zM1055 731h31v33h-31zM1040 797h90v30h-90zM825 831h30v30h-30z"/></g>
              <g fill="#f5f5f5" stroke="#000" shape-rendering="crispEdges"><path d="M502.500 629.500h275v180h-275zM807.500 669.500h160v100h-160zM1052.500 728.500h30v32h-30zM1037.500 794.500h90v30h-90zM822.500 828.500h30v30h-30z"/></g>
              <g fill="none" stroke="#000" stroke-width="1.300"><rect x="1055.500" y="733.500" width="23" height="14" rx="3"/><rect x="826.500" y="833.500" width="23" height="14" rx="3"/></g>
              <g fill="none" stroke="#000"><path marker-end="url(#ah)" d="M967.500 695.500h29v-89H478.500v114h23"/><path marker-end="url(#ah)" d="M777.500 720.500h29"/><path marker-end="url(#ah)" d="M784.500 720.500v125h37"/><path marker-end="url(#ah)" d="M967.500 745.500h84"/><path marker-end="url(#ah)" d="M991.500 745.500v65h45"/></g>
              <circle cx="784.500" cy="720.500" r="2.500"/><circle cx="991.500" cy="745.500" r="2.500"/>
              <text x="505" y="723">from pll</text><text x="752" y="723">to pll</text><text x="810" y="723">clk in</text><text x="938" y="698">clk out</text><text x="942" y="748">lf_out</text>
              <g text-anchor="middle" font-size="10"><text x="639" y="709">PLL</text><text x="640" y="719">Testbench</text><text x="640" y="739">Simulation in Progress...</text><text x="887" y="782">Integer N PLL with Single Modulus Prescaler</text><text x="1067" y="773">Analog VCO control voltage</text></g>
              <g text-anchor="middle" font-size="12"><text x="887" y="710">Integer N</text><text x="887" y="725">Single</text><text x="887" y="739">Modulus</text><text x="1082" y="813">out.apll_vcntl</text></g>
              <rect x="392.500" y="823.500" width="24" height="24" rx="3" fill="#ddd" stroke="#ccc"/><path d="M398 829q6-3 13 0v13q-6 3-13 0z" fill="#aaa" stroke="#777"/><path d="M398 832q6 3 13 0M398 837q6 3 13 0" fill="none" stroke="#eee"/>
            </svg>
          </div>
        </div>
      </div>
      <div class="dataed-head d-flex align-items-center flex-shrink-0"><span>模型数据编辑器</span><svg class="ms-auto me-2" width="14" height="14"><use href="#circ"/></svg><svg width="10" height="10" color="#555"><use href="#xx"/></svg></div>
      <div class="dt d-flex flex-shrink-0"><button class="w5">输入端口/输出端口</button><button class="active">信号</button><button class="w4">数据存储</button><button class="w2">状态</button><button class="w2">参数</button></div>
      <div class="dtools d-flex align-items-center flex-shrink-0">
        <div class="position-relative"><select class="pick" aria-label="视图"><option>检测</option></select><i class="tri dark position-absolute top-50 end-0 me-2 translate-middle-y"></i></div>
        <button class="sq ms-2" aria-label="层次"><svg width="18" height="16" viewBox="0 0 18 16"><path d="M1.500 1.500h15v5h-15z" fill="url(#gBlue)" stroke="#2a5f8c"/><path d="M9 7v2M5 12V9h9v3" fill="none" stroke="#777"/><path d="M1.500 11.500h6v3h-6zM10.500 11.500h6v3h-6z" fill="#bbb" stroke="#777"/></svg></button>
        <button class="sq next" aria-label="刷新"><svg width="18" height="16" viewBox="0 0 18 16"><path d="M13.500 11a5.500 5.500 0 11-1-6.500" fill="none" stroke="#3f6b12" stroke-width="4"/><path d="M13.500 11a5.500 5.500 0 11-1-6.500" fill="none" stroke="#9cc94a" stroke-width="2"/><path d="M9 7.500h7.500V1z" fill="#9cc94a" stroke="#3f6b12" stroke-width=".8"/></svg></button>
        <button class="sq ms-auto me-1" aria-label="筛选"><svg width="18" height="16" viewBox="0 0 18 16"><path d="M1.500 1.500h10v8h-10z" fill="#fff" stroke="#555"/><path d="M3 3l4 2.500L3 8z" fill="#2b8cc9"/><path d="M6 5h11l-4 4v5l-2.500 1.500V9z" fill="#999" stroke="#555"/></svg></button>
        <input class="filt" placeholder="筛选内容" aria-label="筛选内容">
      </div>
      <div class="sigs flex-grow-1">
        <table>
          <colgroup><col style="width:15px"><col style="width:337px"><col><col style="width:65px"><col style="width:60px"></colgroup>
          <thead><tr><th colspan="2" scope="col">Source<svg class="position-absolute top-0 start-50 translate-middle-x" width="9" height="5"><path d="M1 4.500l3.500-3.500L8 4.500" fill="none" stroke="#555"/></svg></th><th scope="col">Name</th><th scope="col">Test Point</th><th scope="col">Log Data</th></tr></thead>
          <tbody>
          <tr><td class="gut"></td><td><span class="d-flex align-items-center ps-1 gap-2 nowrap"><svg width="16" height="10"><use href="#sig"/></svg>Integer N PLL with Single Modulus Prescaler:1</span></td><td></td><td><input class="grid-check" type="checkbox" aria-label="Test Point 1"></td><td><input class="grid-check" type="checkbox" aria-label="Log Data 1"></td></tr>
          <tr><td class="gut"></td><td><span class="d-flex align-items-center ps-1 gap-2 nowrap"><svg width="16" height="10"><use href="#sig"/></svg>Integer N PLL with Single Modulus Prescaler:2</span></td><td></td><td><input class="grid-check" type="checkbox" aria-label="Test Point 2"></td><td><input class="grid-check" type="checkbox" aria-label="Log Data 2"></td></tr>
          <tr><td class="gut"></td><td><span class="d-flex align-items-center ps-1 gap-2 nowrap"><svg width="16" height="10"><use href="#sig"/></svg>PLL Testbench</span></td><td></td><td><input class="grid-check" type="checkbox" aria-label="Test Point 3"></td><td><input class="grid-check" type="checkbox" aria-label="Log Data 3"></td></tr>
          </tbody>
        </table>
      </div>
    </div>
  </div>
</section>

<!-- red annotation arrows -->
<svg class="marks position-absolute w-100 h-100" viewBox="0 0 1899 1027" preserveAspectRatio="xMinYMin meet" fill="#ed1c24" stroke="#ed1c24" stroke-width="4" stroke-linecap="round">
  <path d="M6 97L78 40M528 238L454 312M1687 453L1804 320M1117 669L1072 712"/>
  <path stroke="none" d="M87 32l-9.500 15.500-2-5.500-5.500-2zM445 321l5-16 3 6.500 7.500 3zM1813 310l-3.500 17-4-5.500-7-1.500zM1064 721l6-16 2.500 6 7 4z"/>
</svg>
</body>
</html>
